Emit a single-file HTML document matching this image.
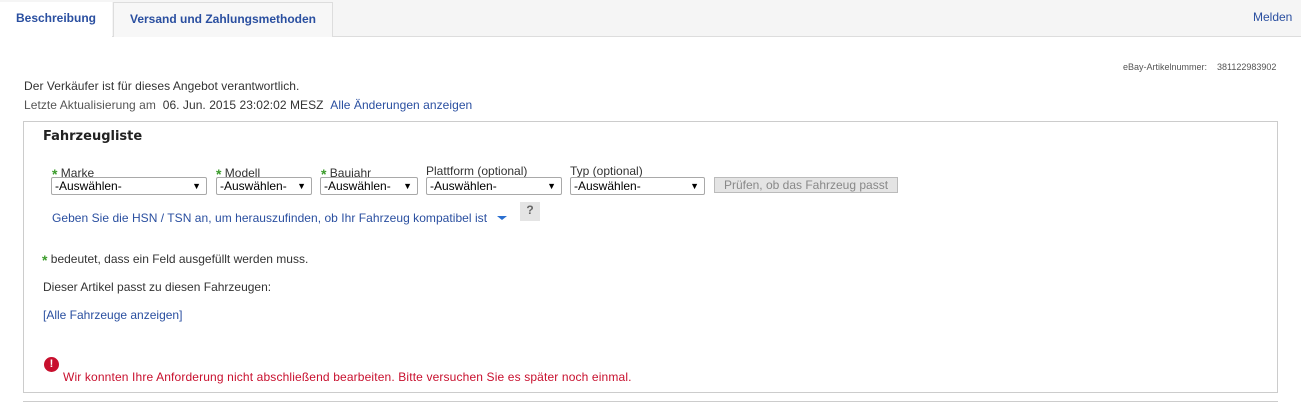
<!DOCTYPE html>
<html><head><meta charset="utf-8"><style>
body{margin:0;width:1301px;height:403px;background:#fff;font-family:"Liberation Sans",Arial,sans-serif;font-size:12px;color:#333;position:relative;overflow:hidden}
.a{position:absolute;white-space:nowrap}
.bar{position:absolute;left:0;top:0;width:1301px;height:36px;background:#f5f5f5;border-bottom:1px solid #ddd}
.tab{position:absolute;top:2px;height:35px;font-weight:bold;font-size:12px;color:#2a4fa0;line-height:32px;text-align:center}
.box{position:absolute;left:23px;top:121px;width:1253px;height:270px;border:1px solid #ccc}
.sel{position:absolute;top:177px;border:1px solid #a9a9a9;border-radius:2px;font-size:12px;line-height:16px;padding-left:3px;box-sizing:border-box;height:18px;color:#000;background:#fff}
.sel::after{content:"▼";position:absolute;right:5px;top:0;font-size:9px}
.lbl{position:absolute;top:164px;font-size:12px;color:#333}
.st{color:#3c9c2c;font-weight:bold;font-size:14px;position:relative;top:2px}
.blue{color:#2a4fa0}
</style></head><body>
<div class="bar"></div>
<div class="tab" style="left:0;width:112px;background:#fff">Beschreibung</div>
<div class="tab" style="left:113px;width:220px;background:#f7f7f7;border:1px solid #ddd;border-bottom:none;box-sizing:border-box;height:35px">Versand und Zahlungsmethoden</div>
<div class="a blue" style="left:1253px;top:10px;font-size:12px">Melden</div>
<div class="a" style="left:1123px;top:62px;font-size:9px;color:#555">eBay-Artikelnummer:&nbsp;&nbsp;&nbsp;&nbsp;381122983902</div>
<div class="a" style="left:24px;top:79px;letter-spacing:0.05px">Der Verkäufer ist für dieses Angebot verantwortlich.</div>
<div class="a" style="left:24px;top:98px;color:#555;letter-spacing:0.05px">Letzte Aktualisierung am &nbsp;<span style="color:#333">06. Jun. 2015 23:02:02 MESZ</span> &nbsp;<span class="blue">Alle Änderungen anzeigen</span></div>
<div class="box"></div>
<div class="a" style="left:43px;top:129px;font-size:13px;font-weight:bold;color:#222;font-family:'DejaVu Sans',sans-serif">Fahrzeugliste</div>
<div class="lbl" style="left:52px"><span class="st">*</span> Marke</div>
<div class="lbl" style="left:216px"><span class="st">*</span> Modell</div>
<div class="lbl" style="left:321px"><span class="st">*</span> Baujahr</div>
<div class="lbl" style="left:426px">Plattform (optional)</div>
<div class="lbl" style="left:570px">Typ (optional)</div>
<div class="sel" style="left:51px;width:156px">-Auswählen-</div>
<div class="sel" style="left:216px;width:96px">-Auswählen-</div>
<div class="sel" style="left:320px;width:98px">-Auswählen-</div>
<div class="sel" style="left:426px;width:136px">-Auswählen-</div>
<div class="sel" style="left:570px;width:135px">-Auswählen-</div>
<div class="a" style="left:714px;top:177px;width:184px;height:16px;background:#e4e4e4;border:1px solid #bbb;box-sizing:border-box;color:#888;text-align:center;line-height:14px">Prüfen, ob das Fahrzeug passt</div>
<div class="a blue" style="left:52px;top:211px;letter-spacing:0.04px">Geben Sie die HSN / TSN an, um herauszufinden, ob Ihr Fahrzeug kompatibel ist</div>
<div class="a" style="left:497px;top:216px;width:0;height:0;border-left:5px solid transparent;border-right:5px solid transparent;border-top:4px solid #2a6fd0"></div>
<div class="a" style="left:520px;top:202px;width:20px;height:19px;background:#e4e4e4;color:#666;font-weight:bold;text-align:center;line-height:16px">?</div>
<div class="a" style="left:42px;top:250px"><span class="st">*</span> bedeutet, dass ein Feld ausgefüllt werden muss.</div>
<div class="a" style="left:43px;top:280px">Dieser Artikel passt zu diesen Fahrzeugen:</div>
<div class="a blue" style="left:43px;top:308px">[Alle Fahrzeuge anzeigen]</div>
<div class="a" style="left:44px;top:357px;width:15px;height:15px;border-radius:50%;background:#c8102e;color:#fff;font-weight:bold;font-size:11px;text-align:center;line-height:15px">!</div>
<div class="a" style="left:63px;top:370px;color:#c8102e;letter-spacing:0.14px">Wir konnten Ihre Anforderung nicht abschließend bearbeiten. Bitte versuchen Sie es später noch einmal.</div>
<div class="a" style="left:23px;top:401px;width:1255px;height:1px;background:#ccc"></div>
</body></html>
